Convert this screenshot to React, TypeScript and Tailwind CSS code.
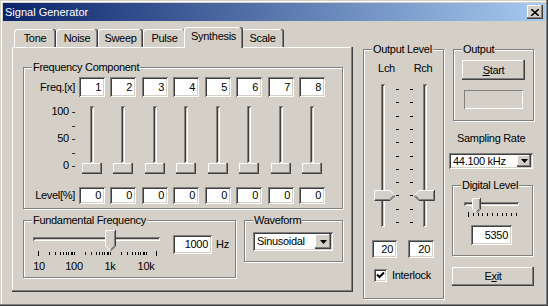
import type { ReactNode } from "react";

const raised = "bg-[#D4D0C8] shadow-[inset_-1px_-1px_0_#404040,inset_-2px_-2px_0_#808080,inset_1px_1px_0_#fff]";
const sunken = "bg-white shadow-[inset_1px_1px_0_#808080,inset_-1px_-1px_0_#fff,inset_2px_2px_0_#404040,inset_-2px_-2px_0_#D4D0C8]";
const channel = "bg-[#D4D0C8] shadow-[inset_1px_1px_0_#808080,inset_-1px_-1px_0_#fff,inset_2px_2px_0_#404040]";
const tabEdge = "shadow-[inset_-1px_0_0_#404040,inset_-2px_0_0_#808080,inset_1px_1px_0_#fff]";

const tabs = [
  { label: "Tone", w: "w-[42px]" },
  { label: "Noise", w: "w-[42px]" },
  { label: "Sweep", w: "w-[45px]" },
  { label: "Pulse", w: "w-[43px]" },
  { label: "Synthesis", w: "w-[59px]", active: true },
  { label: "Scale", w: "w-[43px]" },
];

// log scale ticks 10 Hz .. 20 kHz, 36px per decade
const ffTicks: { x: number; long: boolean }[] = [];
for (let d = 0; d < 3; d++) {
  for (let k = 1; k <= 9; k++) {
    ffTicks.push({ x: Math.round(38 + 36 * (d + Math.log10(k))) - 24, long: d === 0 && k === 1 });
  }
}
ffTicks.push({ x: 146 - 24, long: false });
ffTicks.push({ x: 156 - 24, long: true });

const levelDashes = Array.from({ length: 11 }, (_, i) => Math.round(5 + 13.3 * i));
const digTicks = Array.from({ length: 11 }, (_, i) => Math.round(15 + 4.8 * i));

function Group({ label, className = "", children }: { label: string; className?: string; children?: ReactNode }) {
  return (
    <div className={`relative shrink-0 border border-[#808080] shadow-[1px_1px_0_#fff,inset_1px_1px_0_#fff] ${className}`}>
      <span className="absolute -top-[8px] left-[8px] bg-[#D4D0C8] px-[1px] leading-[14px] whitespace-nowrap">{label}</span>
      {children}
    </div>
  );
}

function Edit({ value, className = "" }: { value: string; className?: string }) {
  return <div className={`${sunken} shrink-0 flex items-center justify-end pr-[4px] ${className}`}>{value}</div>;
}

function Combo({ value, className = "", btn = "w-[16px] h-[15px]" }: { value: string; className?: string; btn?: string }) {
  return (
    <div className={`${sunken} shrink-0 flex items-center justify-between pl-[4px] pr-[2px] ${className}`}>
      <span>{value}</span>
      <div className={`${raised} ${btn} flex items-center justify-center`}>
        <svg width="7" height="4" viewBox="0 0 7 4"><path d="M0 0H7L3.5 4Z" fill="#000" /></svg>
      </div>
    </div>
  );
}

function ThumbDown({ w, h }: { w: number; h: number }) {
  const b = h - Math.floor(w / 2);
  const m = w / 2;
  return (
    <svg width={w} height={h} viewBox={`0 0 ${w} ${h}`}>
      <path d={`M0 0H${w}V${b}L${m} ${h}L0 ${b}Z`} fill="#D4D0C8" />
      <path d={`M${w - 1.5} 1V${b - 0.5}L${m} ${h - 1.5}`} stroke="#808080" fill="none" />
      <path d={`M${w - 0.5} 0V${b}L${m} ${h}`} stroke="#404040" fill="none" />
      <path d={`M0.5 ${b}V0.5H${w - 1}M0.5 ${b}L${m} ${h - 0.5}`} stroke="#fff" fill="none" />
    </svg>
  );
}

function ThumbRight() {
  return (
    <svg width="21" height="11" viewBox="0 0 21 11">
      <path d="M0 0H16L21 5.5L16 11H0Z" fill="#D4D0C8" />
      <path d="M1 9.5H15.5L19.5 5.5" stroke="#808080" fill="none" />
      <path d="M0 10.5H16L21 5.5" stroke="#404040" fill="none" />
      <path d="M0.5 10.5V0.5H16L20.5 5" stroke="#fff" fill="none" />
    </svg>
  );
}

function ThumbLeft() {
  return (
    <svg width="21" height="11" viewBox="0 0 21 11">
      <path d="M5 0H21V11H5L0 5.5Z" fill="#D4D0C8" />
      <path d="M19.5 1V9.5H5.5L1.5 5.5" stroke="#808080" fill="none" />
      <path d="M20.5 0V10.5H5L0 5.5" stroke="#404040" fill="none" />
      <path d="M0.5 5.5L5 0.5H20" stroke="#fff" fill="none" />
    </svg>
  );
}

export default function App() {
  return (
    <div className="w-[548px] h-[306px] overflow-hidden bg-[#D4D0C8] p-[3px] flex flex-col text-[11px] leading-[13px] tracking-[-0.3px] text-black font-['Liberation_Sans',Arial,sans-serif] shadow-[inset_-1px_-1px_0_#404040,inset_-2px_-2px_0_#808080,inset_1px_1px_0_#D4D0C8,inset_2px_2px_0_#fff]">
      {/* TITLE BAR */}
      <div className="h-[18px] shrink-0 flex items-center px-[2px] bg-[linear-gradient(to_right,#0A246A,#A6CAF0)]">
        <span className="text-white tracking-normal">Signal Generator</span>
        <div className={`ml-auto w-[16px] h-[14px] flex items-center justify-center ${raised}`}>
          <svg width="8" height="7" viewBox="0 0 8 7"><path d="M0 0L8 7M8 0L0 7" stroke="#000" strokeWidth="1.6" /></svg>
        </div>
      </div>

      <div className="flex items-start flex-1">
        {/* TAB CONTROL */}
        <div className="ml-[9px] mt-[6px] w-[341px] shrink-0 flex flex-col">
          <div className="h-[20px] flex items-end pl-[2px]">
            {tabs.map((t) =>
              t.active ? (
                <div key={t.label} className={`relative z-10 -mx-[2px] -mb-[1px] h-[21px] ${t.w} shrink-0 flex items-center justify-center pb-[2px] bg-[#D4D0C8] rounded-t-[3px] ${tabEdge}`}>
                  {t.label}
                </div>
              ) : (
                <div key={t.label} className={`h-[18px] ${t.w} shrink-0 flex items-center justify-center rounded-t-[3px] ${tabEdge}`}>
                  {t.label}
                </div>
              )
            )}
          </div>
          <div className="relative h-[245px] pl-[11px] pt-[20px] shadow-[inset_-1px_-1px_0_#404040,inset_-2px_-2px_0_#808080,inset_1px_1px_0_#fff]">
            {/* FREQUENCY COMPONENT */}
            <Group label="Frequency Component" className="w-[320px] h-[142px]">
              <div className="flex">
                <div className="w-[51px] shrink-0 flex flex-col items-end mt-[9px]">
                  <div className="h-[20px] flex items-center">Freq.[x]</div>
                  <div className="h-[90px] pt-[8px] flex flex-col items-end">
                    {["100 -", "-", "50 -", "-", "0 -"].map((s, i) => (
                      <div key={i} className="h-[13.5px] leading-[13.5px] whitespace-pre">{s}</div>
                    ))}
                  </div>
                  <div className="h-[17px] flex items-center">Level[%]</div>
                </div>
                {[1, 2, 3, 4, 5, 6, 7, 8].map((n, i) => (
                  <div key={n} className={`w-[26px] shrink-0 flex flex-col items-center mt-[9px] ${i === 0 ? "ml-[4px]" : i % 2 === 0 ? "ml-[6px]" : "ml-[5px]"}`}>
                    <Edit value={String(n)} className="w-[26px] h-[20px]" />
                    <div className="h-[90px] flex flex-col items-center">
                      <div className={`mt-[9px] w-[4px] h-[57px] ${channel}`} />
                      <div className={`w-[20px] h-[11px] ${raised}`} />
                    </div>
                    <Edit value="0" className="w-[26px] h-[17px]" />
                  </div>
                ))}
              </div>
            </Group>

            <div className="flex items-start mt-[11px]">
              {/* FUNDAMENTAL FREQUENCY */}
              <Group label="Fundamental Frequency" className="w-[213px] h-[58px]">
                <div className="flex items-start">
                  <div className="relative w-[140px] shrink-0">
                    <div className={`ml-[9px] mt-[16px] w-[127px] h-[4px] ${channel}`} />
                    <div className="absolute left-[81px] top-[9px]"><ThumbDown w={11} h={21} /></div>
                    <svg width="140" height="5" className="mt-[10px] block">
                      {ffTicks.map((t, i) => (
                        <rect key={i} x={t.x} y={t.long ? 0 : 1} width="1" height={t.long ? 5 : 3} fill="#000" />
                      ))}
                    </svg>
                    <div className="relative h-[14px] mt-[3px] leading-[14px]">
                      <span className="absolute left-[0px] w-[30px] text-center">10</span>
                      <span className="absolute left-[35px] w-[30px] text-center">100</span>
                      <span className="absolute left-[71px] w-[30px] text-center">1k</span>
                      <span className="absolute left-[107px] w-[30px] text-center">10k</span>
                    </div>
                  </div>
                  <Edit value="1000" className="ml-[9px] mt-[14px] w-[39px] h-[19px]" />
                  <div className="ml-[4px] mt-[14px] h-[19px] flex items-center">Hz</div>
                </div>
              </Group>

              {/* WAVEFORM */}
              <Group label="Waveform" className="ml-[8px] w-[99px] h-[42px]">
                <Combo value="Sinusoidal" className="ml-[8px] mt-[11px] w-[80px] h-[19px]" />
              </Group>
            </div>
          </div>
        </div>

        {/* OUTPUT LEVEL */}
        <Group label="Output Level" className="ml-[10px] mt-[28px] w-[81px] h-[250px]">
          <div className="flex mt-[11px] h-[14px] leading-[14px]">
            <div className="ml-[10px] w-[25px] text-center">Lch</div>
            <div className="ml-[11px] w-[26px] text-center">Rch</div>
          </div>
          <div className="flex mt-[9px] h-[150px]">
            <div className="relative ml-[10px] w-[21px] shrink-0">
              <div className={`ml-[7px] w-[4px] h-[143px] ${channel}`} />
              <div className="absolute left-0 top-[106px]"><ThumbRight /></div>
            </div>
            <svg width="19" height="150" className="shrink-0 block">
              {levelDashes.map((y) => (
                <g key={y}>
                  <rect x="1" y={y} width="3" height="1" fill="#000" />
                  <rect x="15" y={y} width="3" height="1" fill="#000" />
                </g>
              ))}
            </svg>
            <div className="relative w-[21px] shrink-0">
              <div className={`ml-[9px] w-[4px] h-[143px] ${channel}`} />
              <div className="absolute left-0 top-[106px]"><ThumbLeft /></div>
            </div>
          </div>
          <div className="flex mt-[6px]">
            <Edit value="20" className="ml-[8px] w-[25px] h-[18px]" />
            <Edit value="20" className="ml-[11px] w-[26px] h-[18px]" />
          </div>
          <div className="flex items-center mt-[11px] h-[13px]">
            <div className={`ml-[10px] w-[13px] h-[13px] shrink-0 flex items-center justify-center ${sunken}`}>
              <svg width="9" height="9" viewBox="0 0 9 9"><path d="M1 3.5L3.5 6L8 1.5" stroke="#000" strokeWidth="2" fill="none" /></svg>
            </div>
            <span className="ml-[5px]">Interlock</span>
          </div>
        </Group>

        {/* RIGHT COLUMN */}
        <div className="ml-[5px] w-[86px] shrink-0 flex flex-col">
          <Group label="Output" className="ml-[4px] mt-[28px] w-[81px] h-[72px]">
            <div className={`ml-[8px] mt-[10px] w-[63px] h-[20px] flex items-center justify-center ${raised}`}>
              <span><u>S</u>tart</span>
            </div>
            <div className="ml-[10px] mt-[10px] w-[59px] h-[19px] shadow-[inset_1px_1px_0_#808080,inset_-1px_-1px_0_#fff]" />
          </Group>

          <div className="ml-[8px] mt-[10px] h-[14px] leading-[14px]">Sampling Rate</div>
          <Combo value="44.100 kHz" className="mt-[8px] w-[84px] h-[16px] pl-[2px]" btn="w-[14px] h-[12px]" />

          <Group label="Digital Level" className="ml-[3px] mt-[16px] w-[81px] h-[71px]">
            <div className="relative h-[32px] flex flex-col">
              <div className={`ml-[11px] mt-[16px] w-[55px] h-[4px] shrink-0 ${channel}`} />
              <div className="absolute left-[19px] top-[12px]"><ThumbDown w={9} h={15} /></div>
              <svg width="79" height="6" className="mt-[6px] block shrink-0">
                {digTicks.map((x, i) => (
                  <rect key={i} x={x} y={i === 0 ? 0 : 1} width="1" height={i === 0 ? 5 : 3} fill="#000" />
                ))}
              </svg>
            </div>
            <Edit value="5350" className="ml-[18px] mt-[7px] w-[41px] h-[20px]" />
          </Group>

          <div className={`ml-[3px] mt-[11px] w-[82px] h-[19px] flex items-center justify-center ${raised}`}>
            <span>E<u>x</u>it</span>
          </div>
        </div>
      </div>
    </div>
  );
}
